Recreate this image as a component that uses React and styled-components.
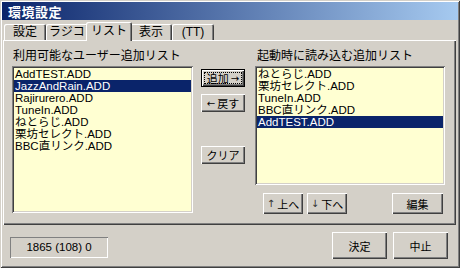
import React from 'react';
import styled, { createGlobalStyle } from 'styled-components';

const FACE = '#d4d0c8';
const SHADOW = '#808080';
const DARK = '#404040';
const FONT = `"Liberation Sans", "Noto Sans CJK JP", sans-serif`;

const GlobalStyle = createGlobalStyle`
  html, body {
    margin: 0;
    padding: 0;
    background: ${FACE};
  }
  * {
    box-sizing: border-box;
  }
`;

// WINDOW
const Window = styled.div`
  width: 460px;
  height: 268px;
  padding: 2px;
  display: flex;
  flex-direction: column;
  background: ${FACE};
  font-family: ${FONT};
  font-size: 12px;
  color: #000;
  box-shadow: inset 1px 1px ${FACE}, inset -1px -1px ${DARK},
    inset 2px 2px #fff, inset -2px -2px ${SHADOW};
`;

const TitleBar = styled.div`
  height: 18px;
  display: flex;
  align-items: center;
  padding-left: 6px;
  background: linear-gradient(to right, #0a246a, #a6caf0);
`;

const Title = styled.span`
  color: #fff;
  font-weight: bold;
  font-size: 13px;
  letter-spacing: 0.5px;
`;

const Body = styled.div`
  flex: 1;
  display: flex;
  flex-direction: column;
  padding: 0 2px 0 1px;
`;

// TABS
const TabStrip = styled.div`
  height: 20px;
  display: flex;
  align-items: flex-end;
  padding-left: 1px;
  position: relative;
  z-index: 1;
`;

const Tab = styled.div`
  width: ${({ $active }) => ($active ? 46 : 42)}px;
  height: ${({ $active }) => ($active ? 19 : 16)}px;
  margin: ${({ $active }) => ($active ? '0 -2px -1px' : '0')};
  padding-top: ${({ $active }) => ($active ? 3 : 2)}px;
  display: flex;
  justify-content: center;
  background: ${FACE};
  border-radius: 2px 2px 0 0;
  position: relative;
  z-index: ${({ $active }) => ($active ? 2 : 1)};
  box-shadow: inset 1px 1px #fff, inset -1px 0 ${DARK}, inset -2px 0 ${SHADOW};
  line-height: 13px;
`;

const Panel = styled.div`
  height: 185px;
  display: flex;
  padding: 10px 0 0 9px;
  box-shadow: inset 1px 1px #fff, inset -1px -1px ${DARK},
    inset -2px -2px ${SHADOW};
`;

// LISTS
const Column = styled.div`
  width: ${({ $width }) => $width}px;
  display: flex;
  flex-direction: column;
  margin-left: ${({ $gap }) => $gap || 0}px;
`;

const GroupLabel = styled.div`
  height: 14px;
  line-height: 13px;
  padding-left: ${({ $indent }) => $indent}px;
  margin-bottom: 2px;
  white-space: nowrap;
`;

const ListBox = styled.div`
  height: ${({ $height }) => $height}px;
  padding: 2px;
  background: #ffffd2;
  font-size: 11.5px;
  box-shadow: inset 1px 1px ${SHADOW}, inset -1px -1px #fff,
    inset 2px 2px ${DARK}, inset -2px -2px ${FACE};
`;

const Row = styled.div`
  height: 12px;
  line-height: 12px;
  padding-left: 1px;
  white-space: nowrap;
  overflow: hidden;
  background: ${({ $selected }) => ($selected ? '#0a246a' : 'transparent')};
  color: ${({ $selected }) => ($selected ? '#fff' : '#000')};
`;

// BUTTONS
const Button = styled.div`
  width: ${({ $width }) => $width}px;
  height: ${({ $height }) => $height}px;
  margin-top: ${({ $top }) => $top || 0}px;
  display: flex;
  align-items: center;
  justify-content: center;
  gap: 2px;
  white-space: nowrap;
  font-size: 11px;
  background: ${FACE};
  position: relative;
  box-shadow: ${({ $default }) =>
    $default
      ? `inset 0 0 0 1px #000, inset 2px 2px #fff, inset -2px -2px ${DARK}, inset -3px -3px ${SHADOW}`
      : `inset 1px 1px #fff, inset -1px -1px ${DARK}, inset -2px -2px ${SHADOW}`};

  ${({ $default }) =>
    $default &&
    `
    ::after {
      content: '';
      position: absolute;
      inset: 3px;
      border: 1px dotted #000;
    }
  `}
`;

const Arrow = styled.span`
  font-family: "DejaVu Sans", sans-serif;
  font-size: 10px;
  color: ${({ $dim }) => ($dim ? '#303030' : '#000')};
`;

const ButtonColumn = styled.div`
  width: 44px;
  margin-left: 8px;
  padding-top: 19px;
  display: flex;
  flex-direction: column;
`;

const ButtonRow = styled.div`
  display: flex;
  gap: 4px;
  margin-top: 8px;
  padding: 0 2px 0 8px;
`;

const PushRight = styled.div`
  margin-left: auto;
`;

// FOOTER
const Footer = styled.div`
  flex: 1;
  display: flex;
  align-items: center;
  gap: 6px;
  padding: 0 8px 0 7px;
`;

const StatusBox = styled.div`
  width: 98px;
  height: 21px;
  margin-top: 3px;
  display: flex;
  align-items: center;
  justify-content: center;
  font-size: 11.5px;
  box-shadow: inset 1px 1px ${SHADOW}, inset -1px -1px #fff;
`;

const available = [
  'AddTEST.ADD',
  'JazzAndRain.ADD',
  'Rajirurero.ADD',
  'TuneIn.ADD',
  'ねとらじ.ADD',
  '栗坊セレクト.ADD',
  'BBC直リンク.ADD',
];

const startup = [
  'ねとらじ.ADD',
  '栗坊セレクト.ADD',
  'TuneIn.ADD',
  'BBC直リンク.ADD',
  'AddTEST.ADD',
];

const tabs = ['設定', 'ラジコ', 'リスト', '表示', '(TT)'];

export default function App() {
  return (
    <>
      <GlobalStyle />
      <Window>
        <TitleBar>
          <Title>環境設定</Title>
        </TitleBar>
        <Body>
          <TabStrip>
            {tabs.map((t) => (
              <Tab key={t} $active={t === 'リスト'}>
                {t}
              </Tab>
            ))}
          </TabStrip>
          <Panel>
            <Column $width={181}>
              <GroupLabel $indent={1}>利用可能なユーザー追加リスト</GroupLabel>
              <ListBox $height={147}>
                {available.map((name) => (
                  <Row key={name} $selected={name === 'JazzAndRain.ADD'}>
                    {name}
                  </Row>
                ))}
              </ListBox>
            </Column>
            <ButtonColumn>
              <Button $width={44} $height={18} $default>
                追加<Arrow>→</Arrow>
              </Button>
              <Button $width={44} $height={18} $top={7}>
                <Arrow>←</Arrow>戻す
              </Button>
              <Button $width={44} $height={18} $top={34}>
                クリア
              </Button>
            </ButtonColumn>
            <Column $width={190} $gap={10}>
              <GroupLabel $indent={2}>起動時に読み込む追加リスト</GroupLabel>
              <ListBox $height={119}>
                {startup.map((name) => (
                  <Row key={name} $selected={name === 'AddTEST.ADD'}>
                    {name}
                  </Row>
                ))}
              </ListBox>
              <ButtonRow>
                <Button $width={40} $height={21}>
                  <Arrow $dim>↑</Arrow>上へ
                </Button>
                <Button $width={40} $height={21}>
                  <Arrow $dim>↓</Arrow>下へ
                </Button>
                <PushRight>
                  <Button $width={51} $height={21}>
                    編集
                  </Button>
                </PushRight>
              </ButtonRow>
            </Column>
          </Panel>
          <Footer>
            <StatusBox>1865 (108) 0</StatusBox>
            <PushRight>
              <Button $width={55} $height={27}>
                決定
              </Button>
            </PushRight>
            <Button $width={55} $height={27}>
              中止
            </Button>
          </Footer>
        </Body>
      </Window>
    </>
  );
}
